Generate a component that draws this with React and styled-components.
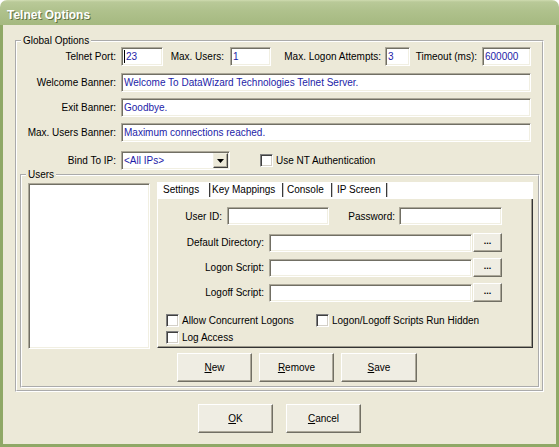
import React from 'react';
import styled, { createGlobalStyle } from 'styled-components';

const GlobalStyle = createGlobalStyle`
    html, body {
        margin: 0;
        padding: 0;
        background: #fff;
    }
    body {
        font-family: "Liberation Sans", Arial, sans-serif;
        font-size: 10px;
        color: #000;
    }
    * {
        box-sizing: border-box;
    }
`

const Window = styled.div`
    width: 559px;
    height: 447px;
    display: flex;
    flex-direction: column;
`

const TitleBar = styled.div`
    flex: none;
    height: 25px;
    border-radius: 7px 7px 0 0;
    background: linear-gradient(#cfdbb0 0px, #b9c998 2px, #afc18c 45%, #a5b980 100%);
    color: #fff;
    font: bold 12px "Liberation Sans", Arial, sans-serif;
    text-shadow: 1px 1px 0 #5f7040;
    padding: 4px 0 0 7px;
    display: flex;
    align-items: center;
`

const Body = styled.div`
    flex: 1;
    background: #ece9d8;
    border: 3px solid #8fa866;
    border-top: 0;
    padding: 9px 12px 0 12px;
    display: flex;
    flex-direction: column;
`

const Group = styled.fieldset`
    margin: ${props => props.$margin || '0'};
    padding: 0;
    min-width: 0;
    border: 2px groove #fff;
    flex: none;
`

const Legend = styled.legend`
    margin-left: 4px;
    padding: 0 2px;
    line-height: 13px;
`

const Stack = styled.div`
    display: flex;
    flex-direction: column;
`

const Row = styled.div`
    flex: none;
    display: flex;
    align-items: ${props => props.$align || 'center'};
    height: ${props => props.$h || 19}px;
    margin-top: ${props => props.$mt || 0}px;
    padding-left: ${props => props.$pl || 0}px;
`

const Label = styled.div`
    flex: none;
    width: ${props => props.$w}px;
    margin-right: ${props => props.$gap ?? 5}px;
    display: flex;
    justify-content: flex-end;
    white-space: nowrap;
`

const Edit = styled.div`
    flex: none;
    position: relative;
    width: ${props => props.$w}px;
    height: ${props => props.$h || 19}px;
    background: #fff;
    border: 1px solid;
    border-color: #aca899 #fff #fff #aca899;
    box-shadow: inset 1px 1px 0 #716f64, inset -1px -1px 0 #f1efe2;
    color: #1c1ca8;
    padding-left: 2px;
    display: flex;
    align-items: center;
    white-space: nowrap;
    overflow: hidden;
`

const Caret = styled.span`
    width: 1px;
    height: 13px;
    background: #000;
    margin-right: 1px;
`

const Combo = styled(Edit)`
    justify-content: space-between;
    padding-right: 1px;
`

const DropButton = styled.div`
    width: 15px;
    height: 15px;
    background: #ece9d8;
    border: 1px solid;
    border-color: #f1efe2 #404040 #404040 #f1efe2;
    box-shadow: inset -1px -1px 0 #aca899;
    display: flex;
    align-items: center;
    justify-content: center;
`

const CheckItem = styled.label`
    flex: none;
    display: flex;
    align-items: center;
    gap: 3px;
    width: ${props => props.$w ? `${props.$w}px` : 'auto'};
    margin-left: ${props => props.$ml || 0}px;
    white-space: nowrap;
`

const Box = styled.span`
    flex: none;
    width: 13px;
    height: 13px;
    background: #fff;
    border: 1px solid;
    border-color: #808080 #fff #fff #808080;
    box-shadow: inset 1px 1px 0 #404040, inset -1px -1px 0 #d4d0c8;
`

const UsersBody = styled.div`
    display: flex;
    align-items: flex-start;
    gap: 7px;
    padding: 1px 5px 4px 6px;
`

const ListBox = styled.div`
    flex: none;
    width: 122px;
    height: 166px;
    margin-top: 1px;
    background: #fff;
    border: 1px solid;
    border-color: #aca899 #fff #fff #aca899;
    box-shadow: inset 1px 1px 0 #716f64, inset -1px -1px 0 #f1efe2;
`

const RightColumn = styled.div`
    display: flex;
    flex-direction: column;
`

const TabControl = styled.div`
    width: 376px;
    height: 166px;
    display: flex;
    flex-direction: column;
`

const TabStrip = styled.div`
    flex: none;
    height: 17px;
    background: #fff;
    display: flex;
    align-items: flex-start;
`

const Tab = styled.div`
    flex: none;
    width: ${props => props.$w}px;
    height: 14px;
    margin-top: 1px;
    line-height: 14px;
    padding-left: ${props => props.$pl}px;
    border-right: 1px solid #3a3a3a;
    box-shadow: 1px 0 0 #c8c8c8;
    white-space: nowrap;
`

const TabPage = styled.div`
    flex: 1;
    background: #ece9d8;
    border-left: 1px solid #fff;
    border-right: 1px solid #333;
    border-bottom: 1px solid #333;
    box-shadow: inset -1px -1px 0 #9d9a8c;
    padding-top: 8px;
    display: flex;
    flex-direction: column;
`

const ButtonRow = styled.div`
    flex: none;
    display: flex;
    gap: ${props => props.$gap || 7}px;
    margin-top: ${props => props.$mt || 0}px;
    padding-left: ${props => props.$pl || 0}px;
`

const Button = styled.button`
    flex: none;
    width: ${props => props.$w || 75}px;
    height: ${props => props.$h || 29}px;
    margin-left: ${props => props.$ml || 0}px;
    padding: 0;
    font: 10px "Liberation Sans", Arial, sans-serif;
    color: #000;
    background: #efede3;
    border: 1px solid;
    border-color: #fff #716f64 #716f64 #fff;
    box-shadow: inset -1px -1px 0 #aca899;
    line-height: 1;
    u {
        text-decoration-thickness: 1px;
        text-underline-offset: 1px;
    }
`

const Dots = styled(Button)`
    letter-spacing: 0;
    font-weight: bold;
    font-size: 9px;
    padding-bottom: 2px;
`

const scriptRows = ['Default Directory:', 'Logon Script:', 'Logoff Script:'];

const App = () => (
    <Window>
        <GlobalStyle />
        <TitleBar>Telnet Options</TitleBar>
        <Body>
            <Group>
                <Legend>Global Options</Legend>
                <Stack>
                    <Row>
                        <Label $w={99}>Telnet Port:</Label>
                        <Edit $w={42}><Caret />23</Edit>
                        <Label $w={61} $gap={6}>Max. Users:</Label>
                        <Edit $w={41}>1</Edit>
                        <Label $w={110} $gap={4}>Max. Logon Attempts:</Label>
                        <Edit $w={25}>3</Edit>
                        <Label $w={67}>Timeout (ms):</Label>
                        <Edit $w={49}>600000</Edit>
                    </Row>
                    <Row $mt={7}>
                        <Label $w={99}>Welcome Banner:</Label>
                        <Edit $w={410}>Welcome To DataWizard Technologies Telnet Server.</Edit>
                    </Row>
                    <Row $mt={6}>
                        <Label $w={99}>Exit Banner:</Label>
                        <Edit $w={410}>Goodbye.</Edit>
                    </Row>
                    <Row $mt={6}>
                        <Label $w={99}>Max. Users Banner:</Label>
                        <Edit $w={410}>Maximum connections reached.</Edit>
                    </Row>
                    <Row $mt={9}>
                        <Label $w={99}>Bind To IP:</Label>
                        <Combo $w={109}>
                            &lt;All IPs&gt;
                            <DropButton>
                                <svg width="7" height="4" viewBox="0 0 7 4">
                                    <polygon points="0,0 7,0 3.5,4" fill="#000" />
                                </svg>
                            </DropButton>
                        </Combo>
                        <CheckItem $ml={30}><Box />Use NT Authentication</CheckItem>
                    </Row>
                    <Group $margin="-2px 2px 2px 3px">
                        <Legend>Users</Legend>
                        <UsersBody>
                            <ListBox />
                            <RightColumn>
                                <TabControl>
                                    <TabStrip>
                                        <Tab $w={53} $pl={6}>Settings</Tab>
                                        <Tab $w={73} $pl={2}>Key Mappings</Tab>
                                        <Tab $w={49} $pl={4}>Console</Tab>
                                        <Tab $w={55} $pl={5}>IP Screen</Tab>
                                    </TabStrip>
                                    <TabPage>
                                        <Row $h={18}>
                                            <Label $w={64}>User ID:</Label>
                                            <Edit $w={102} $h={18} />
                                            <Label $w={66} $gap={4}>Password:</Label>
                                            <Edit $w={103} $h={18} />
                                        </Row>
                                        {scriptRows.map((text, i) => (
                                            <Row key={text} $mt={i === 0 ? 8 : 6} $align="flex-end">
                                                <Label $w={106} style={{ alignSelf: 'center' }}>{text}</Label>
                                                <Edit $w={203} $h={18} />
                                                <Dots $w={29} $h={19} $ml={1}>...</Dots>
                                            </Row>
                                        ))}
                                        <Row $h={13} $mt={12} $pl={8}>
                                            <CheckItem $w={150}><Box />Allow Concurrent Logons</CheckItem>
                                            <CheckItem><Box />Logon/Logoff Scripts Run Hidden</CheckItem>
                                        </Row>
                                        <Row $h={13} $mt={4} $pl={8}>
                                            <CheckItem><Box />Log Access</CheckItem>
                                        </Row>
                                    </TabPage>
                                </TabControl>
                                <ButtonRow $mt={5} $pl={20}>
                                    <Button><u>N</u>ew</Button>
                                    <Button><u>R</u>emove</Button>
                                    <Button $w={76}><u>S</u>ave</Button>
                                </ButtonRow>
                            </RightColumn>
                        </UsersBody>
                    </Group>
                </Stack>
            </Group>
            <ButtonRow $mt={12} $pl={183} $gap={13}>
                <Button><u>O</u>K</Button>
                <Button><u>C</u>ancel</Button>
            </ButtonRow>
        </Body>
    </Window>
);

export default App;
